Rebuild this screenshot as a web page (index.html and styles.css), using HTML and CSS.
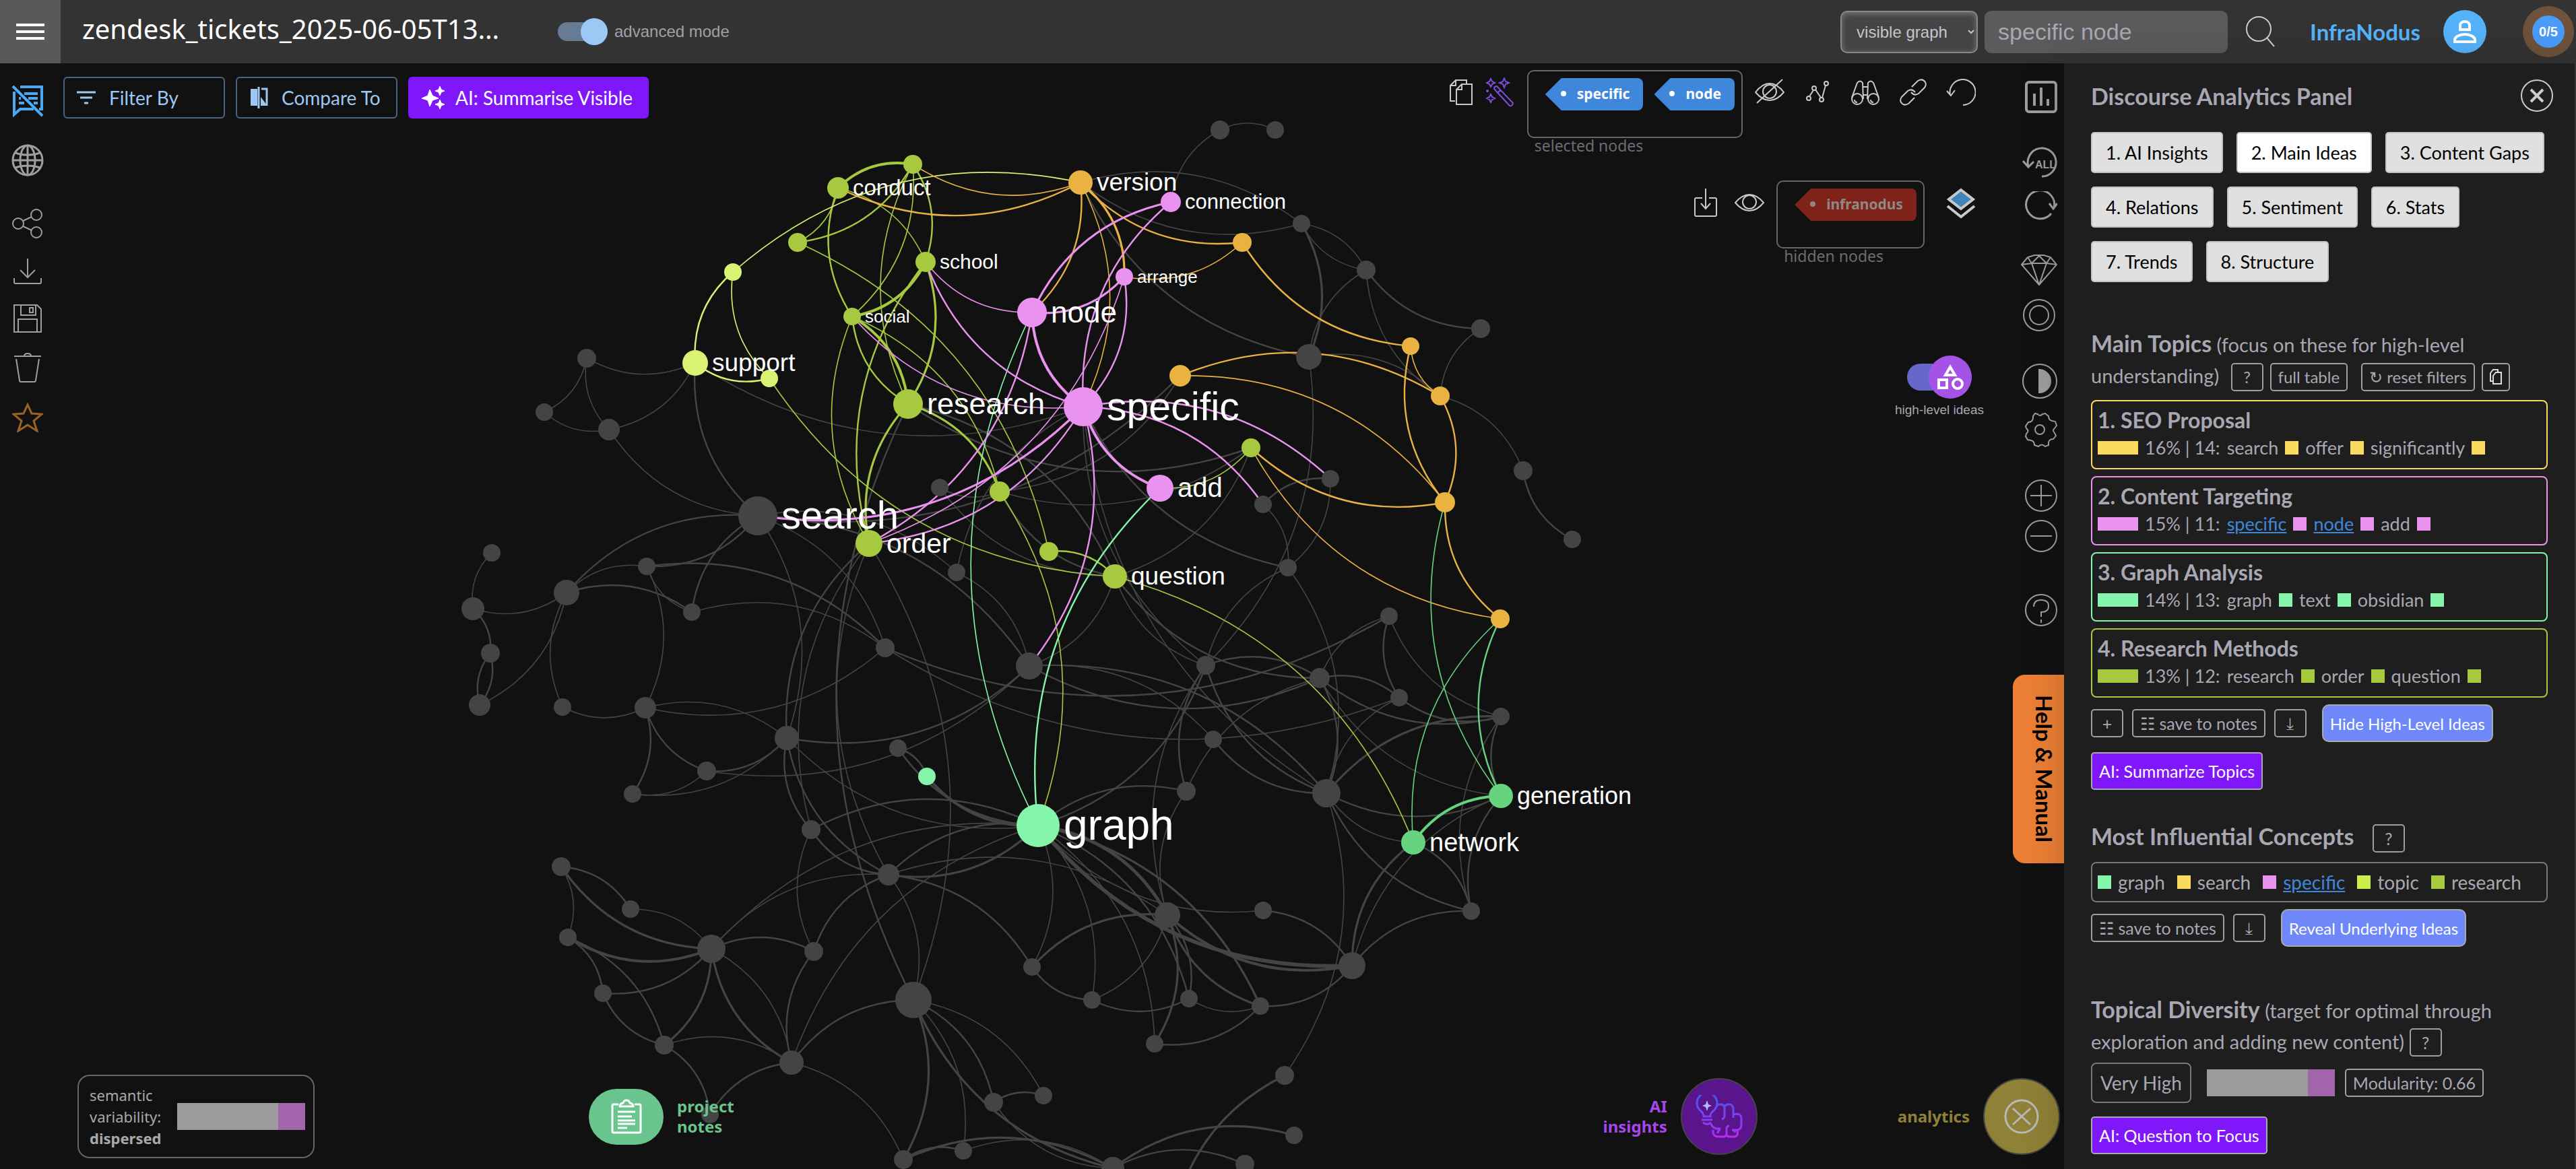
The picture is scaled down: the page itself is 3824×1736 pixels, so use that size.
FILE: index.html
```
<!DOCTYPE html>
<html lang="en">
<head>
    <meta charset="UTF-8">
    <meta name="viewport" content="width=device-width, initial-scale=1.0">
    <title>InfraNodus</title>
    <link rel="stylesheet" href="styles.css">
</head>
<body>

    <header class="header">
        <button class="burger" aria-label="Menu"><span></span><span></span><span></span></button>
        <h1 class="title">zendesk_tickets_2025-06-05T13…</h1>
        <label class="mode"><input type="checkbox" class="switch" checked>advanced mode</label>
        <div class="search">
            <select class="scope" aria-label="Search scope"><option>visible graph</option></select>
            <input type="text" class="query" value="specific node" aria-label="Search">
            <button class="icon" aria-label="Search">
                <svg width="46" height="48" viewBox="0 0 46 48" stroke-width="2"><circle cx="20" cy="20" r="18"/><path d="M32 33 43 46"/></svg>
            </button>
        </div>
        <a href="#" class="brand">InfraNodus</a>
        <button class="avatar" aria-label="Account">
            <svg width="36" height="36" viewBox="0 0 36 36" stroke-width="4"><path d="M3 33v-3c0-4 7-8 15-8s15 4 15 8v3zM11 9c0-4 3-6 7-6s7 2 7 6v6H11z"/></svg>
        </button>
        <button class="quota"><span>0/5</span></button>
    </header>

    <div class="workspace">
        <svg class="graph" id="graph" viewBox="0 94 3824 1642" aria-label="Knowledge graph"></svg>

        <nav class="left-rail">
            <button class="icon blue" aria-label="Hide text">
                <svg width="48" height="48" viewBox="0 0 48 48" stroke-width="4"><path d="M13 3h32v33h-4M33 36H13l-9 8V10M19 13h20M25 20h14M33 27h6M11 20h3M11 27h8M2 2l44 44"/></svg>
            </button>
            <button class="icon" aria-label="Language">
                <svg width="48" height="48" viewBox="0 0 48 48" stroke-width="3"><circle cx="24" cy="24" r="22"/><ellipse cx="24" cy="24" rx="11" ry="22"/><path d="M24 2v44M2 24h44M6 13c10 4 26 4 36 0M6 35c10-4 26-4 36 0"/></svg>
            </button>
            <div class="rail-group">
                <button class="icon" aria-label="Share">
                    <svg width="46" height="44" viewBox="0 0 46 44" stroke-width="2"><circle cx="9" cy="22" r="8"/><circle cx="36" cy="9" r="8"/><circle cx="36" cy="35" r="8"/><path d="m16 18 13-6M16 26l13 6"/></svg>
                </button>
                <button class="icon" aria-label="Download">
                    <svg width="44" height="38" viewBox="0 0 44 38" stroke-width="2"><path d="M22 0v28M11 17l11 11 11-11M2 29v6q0 2 2 2h36q2 0 2-2v-6"/></svg>
                </button>
                <button class="icon" aria-label="Save">
                    <svg width="44" height="42" viewBox="0 0 44 42" stroke-width="2"><path d="M2 1h34l6 6v34H2zM12 1v15h22V1M8 41V22h28v19M25 5h5v7h-5z"/></svg>
                </button>
                <button class="icon" aria-label="Delete">
                    <svg width="44" height="44" viewBox="0 0 44 44" stroke-width="2"><path d="M2 5h40M17 5q0-4 5-4t5 4M5 9l5 32q0 2 2 2h20q2 0 2-2l5-32"/></svg>
                </button>
                <button class="icon star" aria-label="Favourite">
                    <svg width="46" height="44" viewBox="0 0 46 44" stroke-width="3"><path d="m23 3 6 13 15 1-12 10 5 15-14-9-14 9 5-15L2 17l15-1z"/></svg>
                </button>
            </div>
        </nav>

        <main class="stage">
            <div class="stage-top">
                <div class="actions">
                    <button class="action"><svg width="28" height="24" viewBox="0 0 28 24" stroke-width="3"><path d="M0 4h28M5 12h18M11 20h6"/></svg>Filter By</button>
                    <button class="action"><svg width="28" height="32" viewBox="0 0 28 32" stroke-width="3"><path d="M14 0v32M18 3h8v25"/><path d="M12 3H2v25h10zM17 15l10 13H17z" fill="currentColor" stroke="none"/></svg>Compare To</button>
                    <button class="action ai"><svg width="34" height="34" viewBox="0 0 34 34" stroke="none"><path d="m12 5 4 9 9 4-9 3-4 9-3-9-9-3 9-4zM27 0l2 5 5 2-5 2-2 5-2-5-5-2 5-2zM27 20l2 5 5 2-5 2-2 5-2-5-5-2 5-2z" fill="currentColor"/></svg>AI: Summarise Visible</button>
                </div>

                <div class="tools">
                    <div class="tools-row">
                        <div class="icon-group tight">
                            <button class="icon light" aria-label="Copy"><svg width="44" height="44" viewBox="0 0 44 44" stroke-width="2"><path d="M13 35H6V12L14 4h16v6M14 4v8H6M15 18l8-8h15v30H15zM23 10v8h-8"/></svg></button>
                            <button class="icon wand" aria-label="Auto select"><svg width="44" height="44" viewBox="0 0 44 44" stroke-width="2"><path d="m13 17 23 25q4 1 5-4L17 13q-4 0-4 4zM19 22l4-4M8 2l2 4 4 2-4 2-2 4-2-4-4-2 4-2zM28 1l2 5 5 2-5 2-2 5-2-5-5-2 5-2zM8 25l2 4 4 2-4 2-2 4-2-4-4-2 4-2zM3 18v4M1 20h4"/></svg></button>
                        </div>
                        <div class="tag-field">
                            <div class="tag-box"><button class="tag">specific</button><button class="tag">node</button></div>
                            <div class="tag-label">selected nodes</div>
                        </div>
                        <div class="icon-group">
                            <button class="icon light" aria-label="Hide selected"><svg width="44" height="44" viewBox="0 0 44 44" stroke-width="2"><path d="M1 22Q11 9 22 9t21 13Q33 34 22 34T1 22zM3 38 41 3"/><circle cx="22" cy="21" r="10"/></svg></button>
                            <button class="icon light" aria-label="Path"><svg width="44" height="44" viewBox="0 0 44 44" stroke-width="2"><circle cx="9" cy="31" r="3"/><circle cx="17" cy="16" r="3"/><circle cx="28" cy="33" r="3"/><circle cx="35" cy="9" r="3"/><path d="m10 28 6-9M19 18l8 12M29 30l5-18"/></svg></button>
                            <button class="icon light" aria-label="Explore"><svg width="44" height="44" viewBox="0 0 44 44" stroke-width="2"><circle cx="10" cy="32" r="8"/><circle cx="34" cy="32" r="8"/><path d="M2 30 10 8q4-5 8 0l1 24M42 30 34 8q-4-5-8 0l-1 24M19 14h6M19 26h6M6 33q0 4 4 4M30 33q0 4 4 4"/></svg></button>
                            <button class="icon light" aria-label="Link"><svg width="44" height="44" viewBox="0 0 44 44" stroke-width="2"><path d="m20 14 9-9q7-4 11 2 2 4-1 8l-9 9q-6 4-11-2M24 30l-9 9q-7 4-11-2-2-4 1-8l9-9q6-4 11 2"/></svg></button>
                            <button class="icon light" aria-label="Undo"><svg width="44" height="44" viewBox="0 0 44 44" stroke-width="2"><path d="M6 26a19 19 0 1 1 19 15M1 20l6 7 6-8"/></svg></button>
                        </div>
                    </div>

                    <div class="tools-row">
                        <div class="icon-group pair">
                            <button class="icon light" aria-label="Save view"><svg width="44" height="44" viewBox="0 0 44 44" stroke-width="2"><path d="M17 15H8q-2 0-2 2v23q0 2 2 2h28q2 0 2-2V17q0-2-2-2h-9M22 1v30M15 23l7 8 7-8"/></svg></button>
                            <button class="icon light" aria-label="Show hidden"><svg width="44" height="44" viewBox="0 0 44 44" stroke-width="2"><path d="M1 22Q11 10 22 10t21 12Q33 34 22 34T1 22z"/><circle cx="22" cy="21" r="10"/></svg></button>
                        </div>
                        <div class="tag-field">
                            <div class="tag-box"><button class="tag red">infranodus</button></div>
                            <div class="tag-label">hidden nodes</div>
                        </div>
                        <button class="icon light layers" aria-label="Layers"><svg width="44" height="48" viewBox="0 0 44 48" stroke-width="4"><path d="m22 4 18 14-18 14L4 18z" fill="#3f84b9"/><path d="m2 28 20 16 20-16"/></svg></button>
                    </div>

                    <div class="ideas">
                        <button class="ideas-switch" aria-label="High-level ideas"><span><svg width="40" height="40" viewBox="0 0 40 40" stroke-width="4"><path d="m20 5 7 12H13zM3 24h12v12H3z"/><circle cx="31" cy="30" r="7"/></svg></span></button>
                        high-level ideas
                    </div>
                </div>

                <nav class="right-rail">
                    <button class="icon" aria-label="Analytics"><svg width="48" height="48" viewBox="0 0 48 48" stroke-width="4"><rect x="2" y="2" width="44" height="44" rx="4"/><path d="M14 19v18M24 10v27M34 27v10"/></svg></button>
                    <div class="rail-pair">
                        <button class="icon" aria-label="Undo all"><svg width="52" height="48" viewBox="0 -4 52 48" stroke-width="3"><path d="M9 27A21 21 0 1 1 29 42M1 19l8 9 8-8"/><text x="19" y="30" class="all">ALL</text></svg></button>
                        <button class="icon" aria-label="Refresh"><svg width="52" height="46" viewBox="0 0 52 46" stroke-width="3"><path d="M43 33a21 21 0 1 1 4-8M40 18l6 8 6-8"/></svg></button>
                    </div>
                    <div class="rail-pair">
                        <button class="icon" aria-label="Gems"><svg width="54" height="46" viewBox="0 0 54 46" stroke-width="2"><path d="M1 15 10 4 20 1h14l10 3 9 11-26 30zM1 15l15-2h22l15 2M10 4l6 9L27 2l11 11 6-9M16 13l11 32 11-32"/></svg></button>
                        <button class="icon" aria-label="Focus"><svg width="48" height="48" viewBox="0 0 48 48" stroke-width="2"><circle cx="24" cy="24" r="23"/><circle cx="24" cy="24" r="14"/></svg></button>
                    </div>
                    <div class="rail-pair">
                        <button class="icon" aria-label="Contrast"><svg width="52" height="52" viewBox="0 0 52 52" stroke-width="2"><circle cx="26" cy="26" r="25"/><path d="M25 9a17 17 0 0 1 0 34z" fill="currentColor"/></svg></button>
                        <button class="icon" aria-label="Settings"><svg width="52" height="52" viewBox="0 0 52 52" stroke-width="2"><circle cx="26" cy="26" r="7"/><path d="m19 2 4 1q3 4 7 0l4-1 5 4q0 6 5 7l5 1 2 6-3 4q-4 3 0 7l2 4-4 5q-6 0-7 5v4l-5 2q-5-5-10 0l-6-2q0-6-5-7l-5-1-3-5 1-4q5-4 0-8l-1-3 4-6q6 0 7-6v-3z"/></svg></button>
                    </div>
                    <div class="rail-pair zoom">
                        <button class="icon" aria-label="Zoom in"><svg width="48" height="48" viewBox="0 0 48 48" stroke-width="2"><circle cx="24" cy="24" r="23"/><path d="M24 8v32M8 24h32"/></svg></button>
                        <button class="icon" aria-label="Zoom out"><svg width="48" height="48" viewBox="0 0 48 48" stroke-width="2"><circle cx="24" cy="24" r="23"/><path d="M8 24h32"/></svg></button>
                    </div>
                    <button class="icon spaced" aria-label="Help"><svg width="48" height="48" viewBox="0 0 48 48" stroke-width="2"><circle cx="24" cy="24" r="23"/><path d="M13 19q0-10 11-10t11 9q0 9-11 9v7M24 38v5"/></svg></button>
                    <a href="#" class="help-tab">Help &amp; Manual</a>
                </nav>
            </div>

            <div class="stage-bottom">
                <div class="variability">
                    <div>semantic<br>variability:<br><b>dispersed</b></div>
                    <div class="meter"><span style="width: 21%"></span></div>
                </div>
                <div class="launch notes">
                    <button class="pill" aria-label="Project notes"><svg width="46" height="52" viewBox="0 0 46 52" stroke-width="3"><path d="M11 8H4q-2 0-2 2v38q0 2 2 2h38q2 0 2-2V10q0-2-2-2h-7M13 11q0-4 5-5 1-4 5-4t5 4q5 1 5 5zM10 19h26M10 26h21M10 32h26M10 37h26M10 43h14"/></svg></button>
                    <span>project<br>notes</span>
                </div>
                <div class="launch insights">
                    <span>AI<br>insights</span>
                    <button class="round" aria-label="AI insights">
                        <svg width="72" height="64" viewBox="0 0 72 64" stroke-width="3">
                            <defs><linearGradient id="brain" x1="0" y1="0" x2="0" y2="64" gradientUnits="userSpaceOnUse"><stop offset="0" stop-color="#3b5bf0"/><stop offset="1" stop-color="#b92af0"/></linearGradient></defs>
                            <g stroke="url(#brain)"><path d="M13 32q0-5-4-8a15 15 0 1 1 18 0q-4 3-4 8zM10 37h16M12 41q6 5 12 0M33 17q0-3 5-3t6 4v13q0 4-4 5M44 17q2-3 7-3t6 6v9q12-3 12 6v10q0 7-8 7h-4M57 29v5M24 43q2 6 8 7h6M27 52q-1 10 8 10h9q3-1 3-5V50q0-4 4-4M47 57q0 5 4 5h8q6-1 4-10M34 57q0-4 4-6M60 56q-1-4-5-4"/></g>
                            <path d="m18 8 2 6 5 2-5 2-2 6-2-6-5-2 5-2z" fill="#aebcff" stroke="none"/>
                        </svg>
                    </button>
                </div>
                <div class="launch analytics">
                    <span>analytics</span>
                    <button class="round" aria-label="Close analytics"><svg width="52" height="52" viewBox="0 0 52 52" stroke-width="3"><circle cx="26" cy="26" r="24"/><path d="m13 14 26 24M39 14 13 38"/></svg></button>
                </div>
            </div>
        </main>

        <aside class="panel">
            <div class="panel-head">
                <h2>Discourse Analytics Panel</h2>
                <button class="close" aria-label="Close"><svg width="22" height="22" viewBox="0 0 22 22" stroke-width="4"><path d="m2 2 18 18M20 2 2 20"/></svg></button>
            </div>

            <div class="tabs">
                <button>1. AI Insights</button>
                <button class="active">2. Main Ideas</button>
                <button>3. Content Gaps</button>
                <button>4. Relations</button>
                <button>5. Sentiment</button>
                <button>6. Stats</button>
                <button>7. Trends</button>
                <button>8. Structure</button>
            </div>

            <section>
                <p class="lead"><b>Main Topics</b> (focus on these for high-level<br>understanding)
                    <span class="inline-buttons"><button class="small">?</button><button class="small">full table</button><button class="small gap">↻ reset filters</button><button class="small" aria-label="Copy"><svg width="18" height="24" viewBox="0 0 18 24" stroke-width="2"><path d="M4 18H1V6l4-5h7v3M5 10l4-5h8v17H5z"/></svg></button></span>
                </p>
                <div class="topics">
                    <div class="topic yellow">
                        <h3>1. SEO Proposal</h3>
                        <p><i class="bar"></i>16% | 14: <span>search</span><i></i><span>offer</span><i></i><span>significantly</span><i></i></p>
                    </div>
                    <div class="topic pink">
                        <h3>2. Content Targeting</h3>
                        <p><i class="bar"></i>15% | 11: <a href="#">specific</a><i></i><a href="#">node</a><i></i><span>add</span><i></i></p>
                    </div>
                    <div class="topic teal">
                        <h3>3. Graph Analysis</h3>
                        <p><i class="bar"></i>14% | 13: <span>graph</span><i></i><span>text</span><i></i><span>obsidian</span><i></i></p>
                    </div>
                    <div class="topic olive">
                        <h3>4. Research Methods</h3>
                        <p><i class="bar"></i>13% | 12: <span>research</span><i></i><span>order</span><i></i><span>question</span><i></i></p>
                    </div>
                </div>
                <div class="button-row">
                    <button class="small">+</button>
                    <button class="small">☷ save to notes</button>
                    <button class="small">⤓</button>
                    <button class="big">Hide High-Level Ideas</button>
                </div>
                <button class="ai-button">AI: Summarize Topics</button>
            </section>

            <section>
                <p class="lead one"><b>Most Influential Concepts</b> <button class="small">?</button></p>
                <div class="concepts">
                    <i class="teal"></i><span>graph</span>
                    <i class="yellow"></i><span>search</span>
                    <i class="pink"></i><a href="#">specific</a>
                    <i class="lime"></i><span>topic</span>
                    <i class="olive"></i><span>research</span>
                </div>
                <div class="button-row">
                    <button class="small">☷ save to notes</button>
                    <button class="small">⤓</button>
                    <button class="big">Reveal Underlying Ideas</button>
                </div>
            </section>

            <section class="last">
                <p class="lead"><b>Topical Diversity</b> (target for optimal through<br>exploration and adding new content) <button class="small">?</button></p>
                <div class="diversity">
                    <span class="level">Very High</span>
                    <div class="meter"><span style="width: 21%"></span></div>
                    <button class="small">Modularity: 0.66</button>
                </div>
                <button class="ai-button">AI: Question to Focus</button>
            </section>
        </aside>
    </div>

    <script>
        // id: x, y, radius, colour, label, label size
        const nodes = {
            k1: [1811, 193, 14], k2: [1893, 193, 13], u: [1932, 332, 13], v: [1943, 530, 19],
            n1: [2028, 401, 14], n2: [2198, 488, 14], n3: [2261, 699, 14], n4: [2334, 801, 13],
            w: [1975, 711, 13], x: [1875, 749, 13], y: [1912, 843, 13],
            m1: [871, 532, 14], m2: [808, 612, 13], m3: [904, 638, 16],
            a1: [730, 821, 13], a2: [702, 904, 17], a3: [728, 970, 14], a4: [712, 1047, 16],
            a5: [841, 880, 19], a6: [835, 1050, 13], a7: [960, 841, 13], a8: [1027, 909, 13],
            a10: [958, 1051, 16], a11: [1049, 1145, 14], a12: [939, 1179, 13], a13: [1168, 1096, 18],
            a14: [1314, 962, 14], a15: [1395, 724, 13], a16: [1420, 850, 13], a17: [1528, 989, 20],
            a18: [1333, 1111, 13], a19: [1204, 1232, 14], a20: [1319, 1299, 16], a21: [833, 1287, 14],
            a22: [936, 1350, 13], a23: [843, 1392, 13], a24: [895, 1475, 13], a25: [1056, 1409, 21],
            a26: [1208, 1413, 14], a27: [986, 1552, 14], a28: [1175, 1578, 18], a29: [1356, 1485, 27],
            a30: [1054, 1655, 13], a31: [1341, 1722, 14], a32: [1430, 1709, 13], a33: [1475, 1637, 14],
            b1: [1790, 988, 14], b2: [1959, 1007, 15], b3: [2077, 1036, 13], b4: [2228, 1064, 13],
            b5: [1801, 1098, 13], b6: [1761, 1175, 14], b7: [1969, 1178, 21], b8: [2062, 915, 13],
            b9: [2184, 1353, 13], c1: [1875, 1352, 13], c2: [1733, 1359, 19], c3: [2007, 1434, 20],
            c4: [1532, 1436, 13], c5: [1621, 1485, 13], c6: [1765, 1483, 13], c7: [1871, 1494, 13],
            c8: [1714, 1550, 13], c9: [1907, 1597, 14], d1: [1549, 1627, 13], d2: [1921, 1686, 13],
            d3: [1848, 1729, 14], d4: [1652, 1735, 17], d5: [1740, 1820, 13],
            search: [1125, 766, 29, '#444', 'search', 58],
            p: [1484, 730, 15, '#a6c93f'], q: [1557, 819, 14, '#a6c93f'], r: [1857, 665, 14, '#a6c93f'],
            e1: [1355, 244, 14, '#a6c93f'], e2: [1184, 360, 14, '#a6c93f'],
            conduct: [1244, 279, 16, '#a6c93f', 'conduct', 33],
            school: [1374, 389, 15, '#a6c93f', 'school', 30],
            social: [1265, 470, 13, '#a6c93f', 'social', 26],
            research: [1348, 600, 22, '#a6c93f', 'research', 45],
            order: [1290, 807, 20, '#a6c93f', 'order', 41],
            question: [1655, 856, 18, '#a6c93f', 'question', 37],
            y1: [1088, 404, 13, '#d9f272'], y2: [1142, 562, 13, '#d9f272'],
            support: [1032, 539, 19, '#d9f272', 'support', 37],
            version: [1604, 271, 18, '#eab241', 'version', 37],
            s: [1752, 558, 16, '#eab241'], t: [1844, 360, 14, '#eab241'],
            o1: [2094, 514, 13, '#eab241'], o2: [2138, 588, 14, '#eab241'],
            o3: [2145, 746, 15, '#eab241'], o4: [2227, 919, 14, '#eab241'],
            connection: [1738, 300, 15, '#ea92ef', 'connection', 31],
            arrange: [1669, 411, 13, '#ea92ef', 'arrange', 26],
            node: [1532, 464, 22, '#ea92ef', 'node', 44],
            specific: [1608, 604, 29, '#ea92ef', 'specific', 59],
            add: [1722, 725, 20, '#ea92ef', 'add', 40],
            g1: [1376, 1153, 13, '#85f5ab'],
            graph: [1541, 1226, 32, '#85f5ab', 'graph', 64],
            network: [2098, 1251, 18, '#66d37e', 'network', 38],
            generation: [2228, 1182, 18, '#66d37e', 'generation', 36]
        };

        // source>target:width, the width is 2 when left out
        const edges = {
            '#444': `k1>k2 connection>k1 version>u u>version v>version:3 u>v:4 v>n1 u>n1 n1>u n2>n1:3 o2>n1 o2>n2
                v>o2 o2>n3 n4>n3:3 v>b1 x>w:3 x>y w>y y>b7 b1>y b2>b8 b3>b8:3 b4>b8 b8>a14:3 b1>b2:3 b2>b3:3 b4>b2:3
                b2>b7:3 generation>b2 b2>a17:3 b6>b2 a17>b7:3 a17>b5 b3>a14 b1>question b2>question:3 b7>specific y>specific:3
                b1>specific research>question:3 question>p:3 r>research:3 r>p r>question s>p s>search:3 specific>support
                a29>research:3 a20>order a13>order:3 a19>order order>a29 search>a13 search>a14 search>a17:3
                search>a7:3 a5>search:3 a8>search:3 search>support:3 search>m3 support>m1 support>m3 m1>m2 m3>m1 m3>m2
                p>a15 a16>specific search>a16 a16>a17 question>a15 question>a17 a5>a2 a5>a8:3 a5>a7
                a6>a5 a5>a4 a2>a1 a2>a3:3 a3>a4:3 a4>a3:3 a7>a10 a8>a7 a7>a14:3 a8>a14 a10>a6 a10>a13 a14>a10
                a10>a12:3 a11>a10:3 a13>a11:3 a13>a12 a11>a12 a17>a13:3 a17>a11 a18>g1:3 graph>g1:5 graph>a18:3
                a19>a13:3 a20>a13:3 graph>a13 a20>a19:3 a19>graph:3 a20>graph:3 graph>a20:4 a25>graph a28>graph a25>a20
                a26>a20:3 c1>graph a20>c2 a20>c4:3 a20>a29 a26>a19 a25>a26:3 a21>a22:3 a25>a21:4 a22>a25 a21>a23
                a25>a23:5 a23>a24:3 a23>a27:3 a25>a24:3 a27>a24:3 a25>a27:4 a25>a28 a28>a25:4 a28>a26:3 a27>a28 a27>a30:3
                a30>a28:3 a28>a29:3 a28>a31 a29>a31:4 a29>a32 a29>a33:3 a29>d1 d4>a29:4 a31>a32:3 a33>d1:3 a32>d4 d4>a33
                a31>d4:4 d4>d2:4 d4>d3:3 d5>c9:4 b7>c9 graph>c2:6 c3>graph:7 c3>c2:5 graph>c7:4 graph>c6:3 graph>c5
                graph>c4 graph>c8 c2>c6:3 c7>c2:4 c2>c8:4 c2>c5 c4>c2:4 c5>c4:3 c6>c5:3 c7>c6 c3>c7:3 c7>c8:3 c1>c3:3
                graph>b6:3 b1>graph:3 b6>b1:3 c2>b1 c2>b6 b7>b1:3 b7>b5:3 b7>b4:4 network>b7 generation>b7:3 b9>b7:3
                c3>network:4 c3>generation c3>b9:3 network>b9:3 b9>generation:3 b9>b4 b7>b3 b4>b3:3 generation>b4:3`,
            '#a6c93f': `conduct>e1:5 e1>e2:3 conduct>e2 social>conduct:3 social>conduct e1>school:3 e1>social conduct>school
                school>social:5 school>research:4 research>e1 order>school:3 order>social order>research:4
                social>research:5 research>social:3 e2>q social>p research>p:4 question>y2 q>question:3
                question>network p>graph r>add`,
            '#d9f272': 'y1>version support>y1:3 y2>y1 y2>support:3',
            '#eab241': `version>e1 version>conduct:3 version>node:3 version>specific version>arrange:4 t>version:3 t>arrange
                o1>t:3 o2>o1 o3>o1:3 o2>o3:3 s>o2:3 s>o3 o3>r:3 o4>r o4>o3:3`,
            '#66d37e': 'generation>o3 generation>o4:3 network>o4 network>generation:5',
            '#85f5ab': 'graph>node graph>add:3',
            '#ea92ef': `node>school node>connection:4 specific>connection:3 arrange>node:4 arrange>specific:3 arrange>order
                specific>school:3 specific>social specific>node:5 specific>search:4 specific>order:3 node>order:3
                add>specific:5 specific>w:3 specific>x:3 specific>a17:3`
        };

        const svg = document.getElementById('graph');

        function draw(tag, attributes, text) {
            const element = document.createElementNS('http://www.w3.org/2000/svg', tag);
            for (const name in attributes) {
                element.setAttribute(name, attributes[name]);
            }
            if (text) {
                element.textContent = text;
            }
            svg.appendChild(element);
        }

        for (const color in edges) {
            edges[color].split(/\s+/).forEach(function(edge) {
                const [pair, width] = edge.split(':');
                const [from, to] = pair.split('>').map(id => nodes[id]);
                // Control point is pushed out by a quarter of the distance
                const cx = (from[0] + to[0]) / 2 + (to[1] - from[1]) / 4;
                const cy = (from[1] + to[1]) / 2 + (from[0] - to[0]) / 4;
                draw('path', {
                    d: `M${from[0]} ${from[1]}Q${cx} ${cy} ${to[0]} ${to[1]}`,
                    stroke: color,
                    'stroke-width': (width || 2) * 0.8,
                    fill: 'none'
                });
            });
        }

        for (const id in nodes) {
            const [x, y, r, color] = nodes[id];
            draw('circle', { cx: x, cy: y, r: r, fill: color || '#444', stroke: 'none' });
        }

        for (const id in nodes) {
            const [x, y, r, color, label, size] = nodes[id];
            if (label) {
                draw('text', { x: x + r + 6, y: y + size / 3, 'font-size': size, class: 'node-label' }, label);
            }
        }
    </script>

</body>
</html>
```
FILE: styles.css
```
* {
    box-sizing: border-box;
}

body {
    margin: 0;
    height: 100vh;
    display: flex;
    flex-direction: column;
    overflow: hidden;
    background-color: #111;
    color: #a9a7b3;
    font-family: Lato, "Open Sans", sans-serif;
    font-size: 28px;
}

button {
    font: inherit;
    color: inherit;
    cursor: pointer;
}

h1, h2, h3, p {
    margin: 0;
}

svg {
    display: block;
    fill: none;
    stroke: currentColor;
    flex: none;
}

.icon {
    padding: 0;
    border: none;
    background: none;
    color: #9e9e9e;
}

.icon.light {
    color: #c9c9c9;
}

.icon.blue {
    color: #4aa8f5;
}

.icon.star {
    color: #9a6224;
}

.icon.wand {
    color: #7c4ddb;
}

/* Header */
.header {
    display: flex;
    align-items: center;
    height: 94px;
    padding-right: 3px;
    background-color: #333;
}

.burger {
    display: flex;
    flex-direction: column;
    justify-content: center;
    gap: 6px;
    width: 90px;
    height: 94px;
    padding: 0 24px;
    border: none;
    background-color: #595959;
}

.burger span {
    height: 4px;
    background-color: #fff;
}

.title {
    margin-left: 32px;
    padding-bottom: 10px;
    width: 674px;
    font: 40px "Noto Sans", sans-serif;
    color: #fff;
}

.mode {
    display: flex;
    align-items: center;
    gap: 10px;
    margin-left: 32px;
    font: 24px "Liberation Sans", Arial, sans-serif;
    color: #a0a0a8;
}

.switch {
    appearance: none;
    display: flex;
    align-items: center;
    justify-content: flex-end;
    width: 74px;
    height: 28px;
    margin: 0;
    border-radius: 14px;
    background-color: #677b93;
}

.switch::before {
    content: "";
    width: 40px;
    height: 40px;
    border-radius: 50%;
    background-color: #9bc8f5;
}

.search {
    display: flex;
    align-items: center;
    gap: 10px;
    margin-left: auto;
}

.scope, .query {
    height: 63px;
    border-radius: 10px;
    font-family: "Liberation Sans", Arial, sans-serif;
}

.scope {
    width: 204px;
    padding: 0 0 0 18px;
    border: 2px solid #888;
    background-color: #444;
    box-shadow: inset 0 2px 8px rgba(255, 255, 255, 0.3);
    color: #c4c4cb;
    font-size: 24px;
}

.query {
    width: 361px;
    padding: 0 20px;
    border: none;
    background-color: #5b5b5b;
    color: #a9a7b3;
    font-size: 34px;
}

.search .icon {
    margin: 0 6px 0 16px;
    color: #ccc;
}

.brand {
    margin-left: 44px;
    font-size: 33px;
    font-weight: bold;
    color: #55b3fb;
    text-decoration: none;
}

.avatar {
    display: flex;
    align-items: center;
    justify-content: center;
    width: 64px;
    height: 64px;
    margin: 0 54px 0 34px;
    border: none;
    border-radius: 50%;
    background-color: #55b3fb;
    color: #fff;
}

.quota {
    display: flex;
    align-items: center;
    justify-content: center;
    width: 76px;
    height: 76px;
    padding: 0;
    border: none;
    border-radius: 50%;
    background-color: #6e523b;
}

.quota span {
    width: 48px;
    border-radius: 50%;
    background-color: #4a9cfa;
    color: #fff;
    font: bold 20px/48px "Liberation Sans", Arial, sans-serif;
}

/* Workspace */
.workspace {
    position: relative;
    flex: 1;
    display: flex;
    min-height: 0;
}

.graph {
    position: absolute;
    inset: 0;
    width: 100%;
    height: 100%;
}

.node-label {
    fill: #fff;
    stroke: none;
    font-family: "Liberation Sans", Arial, sans-serif;
}

.left-rail, .stage, .panel {
    position: relative;
}

.left-rail {
    display: flex;
    flex-direction: column;
    align-items: center;
    gap: 40px;
    width: 82px;
    padding-top: 32px;
}

.rail-group {
    display: flex;
    flex-direction: column;
    align-items: center;
    gap: 30px;
    padding-top: 8px;
}

.stage {
    flex: 1;
    display: flex;
    flex-direction: column;
    justify-content: space-between;
}

.stage-top {
    display: flex;
    align-items: flex-start;
    padding-left: 12px;
}

.actions {
    display: flex;
    gap: 16px;
    padding-top: 20px;
}

.action {
    display: flex;
    align-items: center;
    gap: 20px;
    min-width: 240px;
    height: 62px;
    padding: 0 18px;
    border: 2px solid #4d6480;
    border-radius: 6px;
    background: none;
    color: #9cc8f5;
}

.action.ai {
    gap: 16px;
    padding-right: 22px;
    border-color: #7f17fa;
    background-color: #7f17fa;
    color: #fff;
}

.tools {
    display: flex;
    flex-direction: column;
    align-items: flex-end;
    margin-left: auto;
    padding-top: 10px;
}

.tools-row {
    display: flex;
    align-items: flex-start;
    gap: 18px;
    height: 164px;
    padding-right: 3px;
}

.icon-group {
    display: flex;
    gap: 27px;
    padding-top: 11px;
}

.icon-group.tight {
    gap: 14px;
}

.icon-group.pair {
    gap: 21px;
}

.layers {
    margin: 10px 0 0 14px;
}

.tag-box {
    display: flex;
    justify-content: flex-end;
    align-items: flex-start;
    gap: 16px;
    height: 101px;
    padding: 10px 10px 0 25px;
    border: 2px solid #666;
    border-radius: 10px;
}

.tag-label {
    padding-left: 11px;
    font: 23px/22px "Noto Sans", sans-serif;
    color: #6b6b72;
}

.tag {
    display: flex;
    align-items: center;
    gap: 16px;
    height: 48px;
    padding: 0 20px 2px 23px;
    border: none;
    border-radius: 8px;
    background-color: #3e87db;
    clip-path: polygon(0 50%, 24px 0, 100% 0, 100% 100%, 24px 100%);
    color: #fff;
    font: bold 21px "Noto Sans", sans-serif;
}

.tag::before {
    content: "";
    width: 8px;
    height: 8px;
    border-radius: 50%;
    background-color: currentColor;
}

.tag.red {
    background-color: #7f2219;
    color: #8f8985;
}

.ideas {
    display: flex;
    flex-direction: column;
    align-items: center;
    gap: 6px;
    padding-top: 96px;
    margin-right: -9px;
    font: 19px "Liberation Sans", Arial, sans-serif;
}

.ideas-switch {
    display: flex;
    align-items: center;
    justify-content: flex-end;
    width: 96px;
    height: 40px;
    margin: 12px 0;
    padding: 0;
    border: none;
    border-radius: 20px;
    background-color: #6767c9;
}

.ideas-switch span {
    padding: 12px;
    border-radius: 50%;
    background-color: #a552e6;
    color: #fff;
}

.right-rail {
    display: flex;
    flex-direction: column;
    align-items: flex-end;
    gap: 48px;
    width: 128px;
    padding: 26px 10px 0 0;
}

.rail-pair {
    display: flex;
    flex-direction: column;
    align-items: center;
    gap: 20px;
}

.rail-pair.zoom {
    gap: 12px;
}

.spaced {
    margin-top: 14px;
}

.all {
    fill: currentColor;
    stroke: none;
    font: bold 16px "Liberation Sans", Arial, sans-serif;
}

.help-tab {
    writing-mode: vertical-rl;
    width: 76px;
    height: 280px;
    margin: 24px -10px 0 0;
    border-radius: 18px 0 0 18px;
    background-color: #ec7f35;
    color: #000;
    font-size: 33px;
    font-weight: bold;
    line-height: 58px;
    text-align: center;
    text-decoration: none;
}

.stage-bottom {
    display: flex;
    align-items: center;
    padding: 0 6px 16px 33px;
}

.variability {
    display: flex;
    align-items: center;
    justify-content: space-between;
    width: 352px;
    padding: 12px 12px 12px 16px;
    border: 2px solid #666;
    border-radius: 18px;
    font: 22px/32px "Noto Sans", sans-serif;
    color: #a9a9a9;
}

.meter {
    display: flex;
    justify-content: flex-end;
    width: 190px;
    height: 40px;
    background-color: #9b9b9b;
}

.meter span {
    background-color: #a265ab;
}

.launch {
    display: flex;
    align-items: center;
    gap: 20px;
    font: bold 24px/30px "Noto Sans", sans-serif;
}

.pill {
    display: flex;
    align-items: center;
    justify-content: center;
    width: 111px;
    height: 83px;
    border: none;
    border-radius: 42px;
    background-color: #69c58d;
    color: #fff;
}

.notes {
    margin-left: 407px;
    color: #69c58d;
}

.insights {
    margin-left: auto;
    color: #a547ec;
    text-align: right;
}

.analytics {
    margin-left: 208px;
    color: #8f8136;
}

.round {
    display: flex;
    align-items: center;
    justify-content: center;
    width: 114px;
    height: 114px;
    border: 2px solid #444;
    border-radius: 50%;
    background-color: #5a148c;
}

.analytics .round {
    background-color: #8f8136;
    color: #b8b8b8;
}

/* Analytics panel */
.panel {
    width: 760px;
    padding: 24px 40px 0;
    border-right: 2px solid #333;
    background-color: #1e1e1e;
    box-shadow: 0 0 60px rgba(0, 0, 0, 0.2);
}

.panel-head {
    display: flex;
    align-items: center;
    justify-content: space-between;
    height: 48px;
    margin-right: -8px;
}

.panel-head h2 {
    font-size: 34px;
}

.close {
    display: flex;
    align-items: center;
    justify-content: center;
    width: 48px;
    height: 48px;
    border: 2px solid #ccc;
    border-radius: 50%;
    background: none;
    color: #ccc;
}

.tabs {
    display: flex;
    flex-wrap: wrap;
    gap: 20px;
    margin: 30px 0 68px;
}

.tabs button {
    height: 61px;
    padding: 0 20px;
    border: 2px solid #c4c4c4;
    border-radius: 5px;
    background-color: #e0e0e0;
    color: #000;
    font-size: 27px;
}

.tabs .active {
    background-color: #fff;
}

.lead {
    margin-bottom: 13px;
    font-size: 29px;
    line-height: 46px;
}

.lead b {
    font-size: 34px;
}

.lead.one .small {
    margin-left: 20px;
}

.inline-buttons {
    display: inline-flex;
    align-items: center;
    gap: 10px;
    margin-left: 10px;
}

.small {
    min-width: 48px;
    height: 42px;
    padding: 0 10px;
    border: 2px solid #9e9e9e;
    border-radius: 5px;
    background: none;
    font-size: 25px;
    line-height: 36px;
}

.inline-buttons .small {
    font-size: 24px;
}

.inline-buttons .small:last-child {
    min-width: 40px;
    color: #ddd;
}

.small.gap {
    margin-left: 10px;
}

.topics {
    display: flex;
    flex-direction: column;
    gap: 10px;
}

.topic {
    height: 103px;
    padding: 9px 8px;
    border: 2px solid;
    border-radius: 8px;
}

.topic h3 {
    color: #a9a7b3;
    font-size: 32px;
    line-height: 37px;
}

.topic p {
    display: flex;
    align-items: center;
    gap: 10px;
    color: #a9a7b3;
    font-size: 27px;
    line-height: 46px;
}

i {
    width: 20px;
    height: 20px;
    background-color: currentColor;
}

.topic.yellow i, .concepts .yellow { color: #fadb5f; }
.topic.pink i, .concepts .pink { color: #e993ee; }
.topic.teal i, .concepts .teal { color: #85f5ab; }
.topic.olive i, .concepts .olive { color: #a6c93f; }
.concepts .lime { color: #cbee4a; }

.topic.yellow { border-color: #fadb5f; }
.topic.pink { border-color: #e993ee; }
.topic.teal { border-color: #85f5ab; }
.topic.olive { border-color: #a6c93f; }

.topic .bar {
    width: 60px;
}

.panel a {
    color: #3e87db;
}

.button-row {
    display: flex;
    align-items: center;
    gap: 13px;
    margin-top: 10px;
}

.big, .ai-button {
    height: 56px;
    padding: 0 10px;
    border: 2px solid #a9a9a9;
    color: #fff;
    font-size: 25px;
}

.big {
    margin-left: 10px;
    border-radius: 10px;
    background-color: #6f88f9;
    font-size: 24px;
}

.ai-button {
    margin-top: 15px;
    border-radius: 5px;
    background-color: #7f17fa;
}

section + section {
    margin-top: 46px;
}

section.last {
    margin-top: 70px;
}

.last .lead {
    margin-bottom: 8px;
}

.last .ai-button {
    margin-top: 20px;
}

.concepts {
    display: flex;
    align-items: center;
    gap: 10px;
    height: 60px;
    padding: 0 8px;
    border: 2px solid #777;
    border-radius: 8px;
}

.concepts i:not(:first-child) {
    margin-left: 8px;
}

.diversity {
    display: flex;
    align-items: center;
    gap: 15px;
}

.level {
    margin-right: 8px;
    padding: 0 12px;
    border: 2px solid #777;
    border-radius: 8px;
    line-height: 56px;
}
```
